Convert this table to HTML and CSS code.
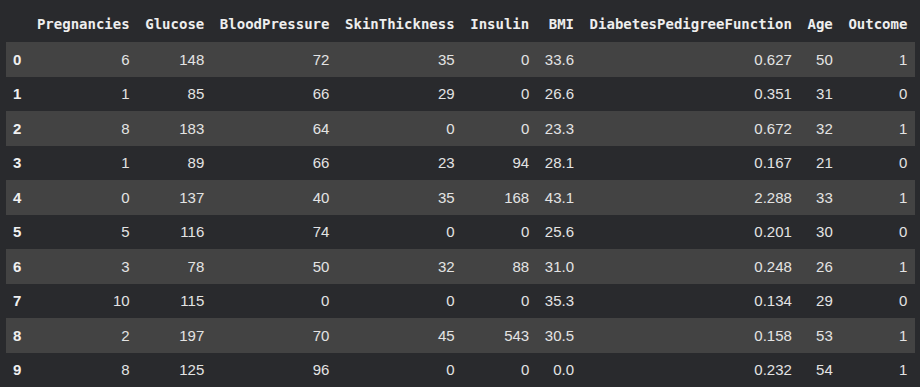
FILE: index.html
```html
<!DOCTYPE html>
<html>
<head>
<meta charset="utf-8">
<link rel="stylesheet" href="styles.css">
</head>
<body>
<div class="wrap">
<table class="df">
<thead>
<tr><th></th><th>Pregnancies</th><th>Glucose</th><th>BloodPressure</th><th>SkinThickness</th><th>Insulin</th><th>BMI</th><th>DiabetesPedigreeFunction</th><th>Age</th><th>Outcome</th></tr>
</thead>
<tbody>
<tr><th>0</th><td>6</td><td>148</td><td>72</td><td>35</td><td>0</td><td>33.6</td><td>0.627</td><td>50</td><td>1</td></tr>
<tr><th>1</th><td>1</td><td>85</td><td>66</td><td>29</td><td>0</td><td>26.6</td><td>0.351</td><td>31</td><td>0</td></tr>
<tr><th>2</th><td>8</td><td>183</td><td>64</td><td>0</td><td>0</td><td>23.3</td><td>0.672</td><td>32</td><td>1</td></tr>
<tr><th>3</th><td>1</td><td>89</td><td>66</td><td>23</td><td>94</td><td>28.1</td><td>0.167</td><td>21</td><td>0</td></tr>
<tr><th>4</th><td>0</td><td>137</td><td>40</td><td>35</td><td>168</td><td>43.1</td><td>2.288</td><td>33</td><td>1</td></tr>
<tr><th>5</th><td>5</td><td>116</td><td>74</td><td>0</td><td>0</td><td>25.6</td><td>0.201</td><td>30</td><td>0</td></tr>
<tr><th>6</th><td>3</td><td>78</td><td>50</td><td>32</td><td>88</td><td>31.0</td><td>0.248</td><td>26</td><td>1</td></tr>
<tr><th>7</th><td>10</td><td>115</td><td>0</td><td>0</td><td>0</td><td>35.3</td><td>0.134</td><td>29</td><td>0</td></tr>
<tr><th>8</th><td>2</td><td>197</td><td>70</td><td>45</td><td>543</td><td>30.5</td><td>0.158</td><td>53</td><td>1</td></tr>
<tr><th>9</th><td>8</td><td>125</td><td>96</td><td>0</td><td>0</td><td>0.0</td><td>0.232</td><td>54</td><td>1</td></tr>
</tbody>
</table>
</div>
</body>
</html>
```
FILE: styles.css
```css
html, body {
  margin: 0;
  padding: 0;
  background: #292a2d;
}
.wrap {
  padding: 0 0 0 6px;
}
.df {
  border-collapse: collapse;
  border-spacing: 0;
  color: #e3e3e3;
  font-family: "Liberation Sans", Arial, sans-serif;
  font-size: 15px;
}
.df thead th {
  font-family: "DejaVu Sans Mono", "Liberation Mono", monospace;
  font-weight: bold;
  font-size: 14px;
  color: #eeeeee;
  text-align: right;
  height: 42px;
  padding: 6px 7.8px 0 7.8px;
  box-sizing: border-box;
  vertical-align: middle;
  white-space: nowrap;
}
.df thead th:first-child {
  padding-left: 7px;
}
.df tbody th {
  font-weight: bold;
  text-align: left;
  color: #f0f0f0;
  padding: 0 7.8px 0 7px;
}
.df td {
  text-align: right;
  padding: 0 7.8px;
  white-space: nowrap;
}
.df tbody tr {
  height: 34.5px;
}
.df tbody tr:nth-child(odd) {
  background: #434343;
}
```
